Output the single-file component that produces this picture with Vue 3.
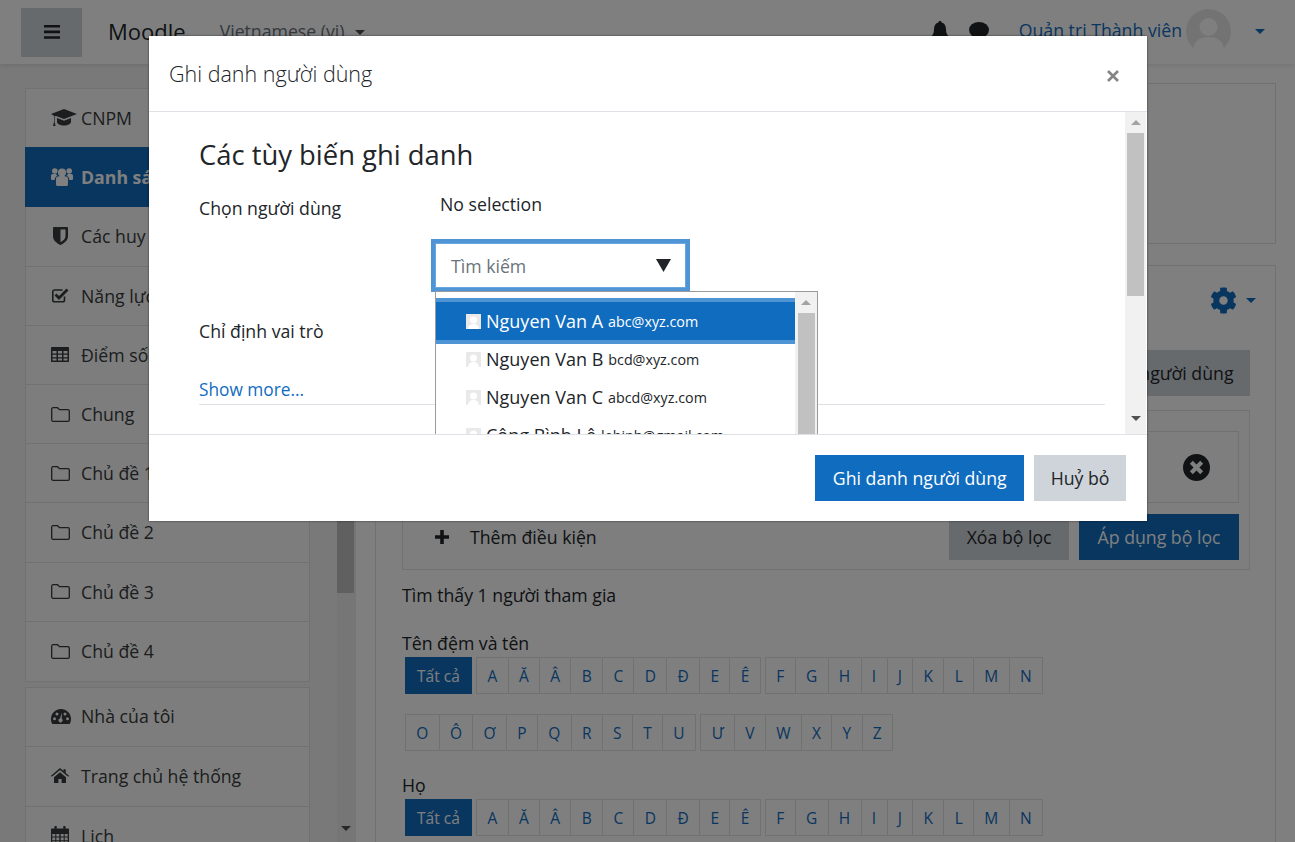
<script setup>
const navTop = [
  { icon: 'cap', label: 'CNPM' },
  { icon: 'users', label: 'Danh sách thành viên', active: true },
  { icon: 'shield', label: 'Các huy hiệu' },
  { icon: 'check', label: 'Năng lực' },
  { icon: 'table', label: 'Điểm số' },
  { icon: 'folder', label: 'Chung' },
  { icon: 'folder', label: 'Chủ đề 1' },
  { icon: 'folder', label: 'Chủ đề 2' },
  { icon: 'folder', label: 'Chủ đề 3' },
  { icon: 'folder', label: 'Chủ đề 4' }
];
const navBottom = [
  { icon: 'gauge', label: 'Nhà của tôi' },
  { icon: 'home', label: 'Trang chủ hệ thống' },
  { icon: 'calendar', label: 'Lịch' }
];
const letters1 = [['A', 'Ă', 'Â', 'B', 'C', 'D', 'Đ', 'E', 'Ê'], ['F', 'G', 'H', 'I', 'J', 'K', 'L', 'M', 'N']];
const letters2 = [['O', 'Ô', 'Ơ', 'P', 'Q', 'R', 'S', 'T', 'U'], ['Ư', 'V', 'W', 'X', 'Y', 'Z']];
const users = [
  { name: 'Nguyen Van A', email: 'abc@xyz.com', selected: true },
  { name: 'Nguyen Van B', email: 'bcd@xyz.com' },
  { name: 'Nguyen Van C', email: 'abcd@xyz.com' },
  { name: 'Công Bình Lê', email: 'lebinh@gmail.com' }
];
const cog = 'M487.4 315.7l-42.6-24.6c4.3-23.2 4.3-47 0-70.2l42.6-24.6c4.9-2.8 7.1-8.6 5.5-14-11.1-35.6-30-67.8-54.7-94.6-3.8-4.1-10-5.1-14.8-2.3L380.8 110c-17.9-15.4-38.5-27.3-60.8-35.1V25.8c0-5.6-3.9-10.5-9.4-11.7-36.7-8.2-74.3-7.8-109.2 0-5.5 1.2-9.4 6.1-9.4 11.7V75c-22.2 7.9-42.8 19.8-60.8 35.1L88.7 85.5c-4.9-2.8-11-1.9-14.8 2.3-24.7 26.7-43.6 58.9-54.7 94.6-1.7 5.4.6 11.2 5.5 14L67.3 221c-4.3 23.2-4.3 47 0 70.2l-42.6 24.6c-4.9 2.8-7.1 8.6-5.5 14 11.1 35.6 30 67.8 54.7 94.6 3.8 4.1 10 5.1 14.8 2.3l42.6-24.6c17.9 15.4 38.5 27.3 60.8 35.1v49.2c0 5.6 3.9 10.5 9.4 11.7 36.7 8.2 74.3 7.8 109.2 0 5.5-1.2 9.4-6.1 9.4-11.7v-49.2c22.2-7.9 42.8-19.8 60.8-35.1l42.6 24.6c4.9 2.8 11 1.9 14.8-2.3 24.7-26.7 43.6-58.9 54.7-94.6 1.5-5.5-.7-11.3-5.6-14.1zM256 336c-44.1 0-80-35.9-80-80s35.9-80 80-80 80 35.9 80 80-35.9 80-80 80z';
</script>

<template>
  <div class="page">
    <header class="topbar">
      <button class="burger">
        <svg width="16" height="14" viewBox="0 0 16 14"><path d="M0 0h16v2.6H0zM0 5.6h16v2.6H0zM0 11.2h16v2.6H0z" fill="#212529" /></svg>
      </button>
      <span class="brand">Moodle</span>
      <span class="lang">Vietnamese ‎(vi)‎</span>
      <i class="caret lang-caret"></i>
      <div class="top-right">
        <svg class="bell" width="18" height="20" viewBox="0 0 18 20"><path d="M9 0c1 0 1.6.7 1.6 1.6C13.400 2.300 15 4.800 15 8c0 4 1 5.500 3 8H0c2-2.500 3-4 3-8 0-3.200 1.600-5.700 4.400-6.400C7.400.7 8 0 9 0zM6.500 17.500h5C11.500 19 10.400 20 9 20s-2.500-1-2.500-2.500z" fill="#212529" /></svg>
        <svg class="bubble" width="20" height="18" viewBox="0 0 20 18"><ellipse cx="10" cy="8" rx="10" ry="8" fill="#212529" /><path d="M4 13l-2 5 7-3z" fill="#212529" /></svg>
        <span class="username">Quản trị Thành viên</span>
        <svg class="avatar" width="45" height="45" viewBox="0 0 45 45">
          <circle cx="22.500" cy="22.500" r="22.500" fill="#e6e6e6" />
          <circle cx="22.500" cy="18" r="9" fill="#fff" />
          <path d="M7 40c1-9 8-12 15.500-12S37 31 38 40c-4 3-9.500 5-15.500 5S11 43 7 40z" fill="#fff" />
        </svg>
        <i class="caret blue-caret"></i>
      </div>
    </header>

    <div class="layout">
      <aside class="drawer">
        <div class="nav-col">
          <nav class="nav-card">
            <a v-for="item in navTop" :key="item.label" class="nav-item" :class="{ active: item.active }">
              <span class="nav-icon">
                <svg v-if="item.icon === 'cap'" width="26" height="18" viewBox="0 0 26 18"><path d="M13 0l13 5-13 5L4.500 6.700 12.500 5.300 3.600 7.200V13l1 4H2l1-4V6.700L0 5zM6 9l7 2.700L20 9v4c0 1.700-3 3.500-7 3.500S6 14.700 6 13z" fill="currentColor" /></svg>
                <svg v-else-if="item.icon === 'users'" width="22" height="20" viewBox="0 0 22 20"><g fill="currentColor"><circle cx="11" cy="5.500" r="4" /><circle cx="3.800" cy="4" r="2.800" /><circle cx="18.200" cy="4" r="2.800" /><path d="M5 11c1-1.400 3-2 6-2s5 .6 6 2v6.500c0 1-1 1.500-2 1.500H7c-1 0-2-.5-2-1.500z" /><path d="M0 8.500C0 7.600.9 7 2.300 7h2.900c.3 1 .8 1.600 1.300 2C4.500 9.600 3.800 11 3.700 13H1.300C.5 13 0 12.400 0 11.700zM22 8.500C22 7.600 21.100 7 19.700 7h-2.900c-.3 1-.8 1.600-1.300 2 2 .6 2.700 2 2.800 4h2.400c.8 0 1.300-.6 1.300-1.300z" /></g></svg>
                <svg v-else-if="item.icon === 'shield'" class="shield" width="15" height="18" viewBox="0 0 15 18"><path d="M1 0h13c.6 0 1 .4 1 1v8c0 5-4.500 7.500-7.500 9C4.500 16.500 0 14 0 9V1c0-.6.400-1 1-1zm6.500 2.500v12.700c2.500-1.400 5-3.200 5-6.200V2.500z" fill="currentColor" fill-rule="evenodd" /></svg>
                <svg v-else-if="item.icon === 'check'" width="18" height="17" viewBox="0 0 18 17"><path d="M13.500 9.500v3.500c0 1-.7 1.800-1.700 1.800H3.500c-1 0-1.700-.8-1.700-1.800V4.700c0-1 .7-1.700 1.700-1.700h8" fill="none" stroke="currentColor" stroke-width="1.600" /><path d="M4.500 7.500l3.500 3.500L16.500 2.500" fill="none" stroke="currentColor" stroke-width="2.800" /></svg>
                <svg v-else-if="item.icon === 'table'" width="18" height="15" viewBox="0 0 18 15"><path d="M1 0h16c.6 0 1 .4 1 1v13c0 .6-.4 1-1 1H1c-.6 0-1-.4-1-1V1c0-.6.400-1 1-1zm.5 4v2.500h4V4zm5.500 0v2.500h4V4zm5.500 0v2.500h4V4zm-11 3.800v2.400h4V7.800zm5.500 0v2.400h4V7.800zm5.500 0v2.400h4V7.800zm-11 3.700v2h4v-2zm5.500 0v2h4v-2zm5.500 0v2h4v-2z" fill="currentColor" fill-rule="evenodd" /></svg>
                <svg v-else width="19" height="15" viewBox="0 0 19 15"><path d="M.7 13V2C.7 1.300 1.300.7 2 .7h4.500l2 2H17c.7 0 1.300.6 1.300 1.300v9c0 .7-.6 1.300-1.300 1.300H2C1.300 14.300.7 13.700.7 13z" fill="none" stroke="currentColor" stroke-width="1.300" /></svg>
              </span>
              <span class="nav-label">{{ item.label }}</span>
            </a>
          </nav>
          <nav class="nav-card second">
            <a v-for="item in navBottom" :key="item.label" class="nav-item">
              <span class="nav-icon">
                <svg v-if="item.icon === 'gauge'" width="20" height="15" viewBox="0 0 20 15"><path d="M10 0c5.500 0 10 4.400 10 10 0 1.900-.5 3.600-1.400 5H1.400C.5 13.600 0 11.900 0 10 0 4.400 4.500 0 10 0zM3.500 8.300a1.500 1.500 0 1 0 0 3 1.500 1.500 0 0 0 0-3zM6 3.600a1.500 1.500 0 1 0 0 3 1.500 1.500 0 0 0 0-3zM14 3.600a1.500 1.500 0 1 0 0 3 1.500 1.500 0 0 0 0-3zM16.500 8.300a1.500 1.500 0 1 0 0 3 1.500 1.500 0 0 0 0-3zM10.700 3.500L9 9.400a2 2 0 1 0 1.800.4z" fill="currentColor" fill-rule="evenodd" /></svg>
                <svg v-else-if="item.icon === 'home'" width="18" height="15" viewBox="0 0 18 15"><path d="M9 0l3.500 3V1.200h2.200V5L18 7.800l-.9 1L9 2.100.9 8.800 0 7.800zM3 9.200l6-5 6 5V15h-4.400v-4H7.400v4H3z" fill="currentColor" /></svg>
                <svg v-else width="18" height="20" viewBox="0 0 18 20"><path d="M1 2.500h16c.6 0 1 .4 1 1V19c0 .6-.4 1-1 1H1c-.6 0-1-.4-1-1V3.500c0-.6.400-1 1-1zm.3 5.500v2.600h3V8zm4 0v2.600h3V8zm4.400 0v2.600h3V8zm4 0v2.600h3V8zm-12.400 3.600v2.600h3v-2.600zm4 0v2.600h3v-2.600zm4.400 0v2.600h3v-2.600zm4 0v2.600h3v-2.600zM1.300 15.200v3.400h3v-3.400zm4 0v3.400h3v-3.400zm4.400 0v3.400h3v-3.400zm4 0v3.400h3v-3.400z" fill="currentColor" fill-rule="evenodd" /><rect x="3.500" width="2.200" height="5" fill="currentColor" /><rect x="12.300" width="2.200" height="5" fill="currentColor" /></svg>
              </span>
              <span class="nav-label">{{ item.label }}</span>
            </a>
          </nav>
        </div>
        <div class="drawer-scroll">
          <div class="drawer-thumb"></div>
          <i class="drawer-arrow"></i>
        </div>
      </aside>

      <main class="main">
        <section class="card summary"></section>
        <section class="card participants">
          <div class="gear-row">
            <svg width="27" height="27" viewBox="0 0 512 512"><path :d="cog" fill="#106cbf" /></svg>
            <i class="caret blue-caret"></i>
          </div>
          <div class="enrol-row"><button class="btn grey">Ghi danh người dùng</button></div>
          <div class="filter-box">
            <div class="filter-inner">
              <svg width="27" height="27" viewBox="0 0 26 26"><circle cx="13" cy="13" r="13" fill="#212529" /><path d="M8 8l10 10M18 8L8 18" stroke="#fff" stroke-width="4" /></svg>
            </div>
            <div class="filter-actions">
              <svg width="14" height="14" viewBox="0 0 14 14"><path d="M5.200 0h3.600v5.200H14v3.600H8.800V14H5.200V8.800H0V5.200h5.200z" fill="#212529" /></svg>
              <span class="add-cond">Thêm điều kiện</span>
              <button class="btn grey clear">Xóa bộ lọc</button>
              <button class="btn blue apply">Áp dụng bộ lọc</button>
            </div>
          </div>
          <p class="found">Tìm thấy 1 người tham gia</p>
          <div class="initials">
            <div class="initials-title">Tên đệm và tên</div>
            <div class="letter-row">
              <a class="letter all">Tất cả</a>
              <div v-for="(group, i) in letters1" :key="i" class="letter-group">
                <a v-for="l in group" :key="l" class="letter">{{ l }}</a>
              </div>
            </div>
            <div class="letter-row">
              <div v-for="(group, i) in letters2" :key="i" class="letter-group">
                <a v-for="l in group" :key="l" class="letter">{{ l }}</a>
              </div>
            </div>
          </div>
          <div class="initials">
            <div class="initials-title">Họ</div>
            <div class="letter-row">
              <a class="letter all">Tất cả</a>
              <div v-for="(group, i) in letters1" :key="i" class="letter-group">
                <a v-for="l in group" :key="l" class="letter">{{ l }}</a>
              </div>
            </div>
          </div>
        </section>
      </main>
    </div>

    <div class="backdrop"></div>

    <div class="modal">
      <div class="modal-head">
        <h5 class="modal-title">Ghi danh người dùng</h5>
        <svg class="close" width="12" height="12" viewBox="0 0 12 12"><path d="M1 1l10 10M11 1L1 11" stroke="#858585" stroke-width="2.600" /></svg>
      </div>
      <div class="modal-body">
        <div class="modal-content">
          <h3 class="options-title">Các tùy biến ghi danh</h3>
          <div class="form-row pick">
            <label>Chọn người dùng</label>
            <div>
              <div class="no-sel">No selection</div>
              <div class="search">
                <span>Tìm kiếm</span>
                <svg width="15" height="13" viewBox="0 0 15 13"><path d="M0 0h15L7.500 13z" fill="#212529" /></svg>
              </div>
            </div>
          </div>
          <div class="form-row role"><label>Chỉ định vai trò</label></div>
          <a class="show-more">Show more...</a>
          <div class="dropdown">
            <div class="options">
              <div v-for="u in users" :key="u.name" class="option" :class="{ selected: u.selected }">
                <svg width="15" height="15" viewBox="0 0 15 15"><rect width="15" height="15" fill="#e9e9e9" /><circle cx="7.500" cy="6" r="3.500" fill="#fff" /><path d="M2 15c.5-4 3-5 5.500-5s5 1 5.500 5z" fill="#fff" /></svg>
                <span class="opt-name">{{ u.name }}</span>
                <small class="opt-mail">{{ u.email }}</small>
              </div>
            </div>
            <div class="drop-scroll">
              <i class="arrow-up"></i>
              <div class="drop-thumb"></div>
            </div>
          </div>
        </div>
        <div class="body-scroll">
          <i class="arrow-up"></i>
          <div class="body-thumb"></div>
          <i class="arrow-down"></i>
        </div>
      </div>
      <div class="modal-foot">
        <button class="btn blue enrol">Ghi danh người dùng</button>
        <button class="btn light">Huỷ bỏ</button>
      </div>
    </div>
  </div>
</template>

<style>
html, body { margin: 0; }
</style>

<style scoped>
.page {
  width: 1295px;
  height: 842px;
  overflow: hidden;
  position: relative;
  background: #fff;
  color: #212529;
  font-family: "Open Sans", "Noto Sans", sans-serif;
  font-size: 17.700px;
}

.topbar {
  height: 64px;
  display: flex;
  align-items: center;
  padding-left: 21px;
  box-sizing: border-box;
  background: #fff;
  box-shadow: 0 2px 4px rgba(0, 0, 0, 0.08);
  position: relative;
}
.burger {
  width: 61px;
  height: 49px;
  border: none;
  background: #ced4da;
  display: flex;
  align-items: center;
  justify-content: center;
}
.brand { margin-left: 26px; font-size: 22px; margin-bottom: 3px; }
.lang { margin-left: 34px; color: #6a737b; margin-bottom: 2px; }
.caret {
  display: inline-block;
  width: 0;
  height: 0;
  border-left: 5.500px solid transparent;
  border-right: 5.500px solid transparent;
  border-top: 5.500px solid currentColor;
}
.lang-caret { margin-left: 10px; color: #495057; }
.blue-caret { color: #106cbf; }
.top-right {
  margin-left: auto;
  display: flex;
  align-items: center;
  padding-right: 30px;
  padding-bottom: 2px;
}
.bubble { margin-left: 20px; }
.username { margin-left: 30px; margin-right: 4px; color: #106cbf; margin-bottom: 3px; }
.top-right .blue-caret { margin-left: 24px; }

.layout { display: flex; height: 778px; }

.drawer {
  width: 356px;
  flex: none;
  box-sizing: border-box;
  background: #f2f2f2;
  display: flex;
  padding: 24px 0 0 25px;
}
.nav-col { width: 285px; flex: none; }
.nav-card {
  background: #fafafa;
  border: 1px solid #dee2e6;
  box-sizing: border-box;
}
.nav-card.second { margin-top: 5px; }
.nav-item {
  height: 59.200px;
  box-sizing: border-box;
  display: flex;
  align-items: center;
  padding-left: 25px;
  color: #373a3c;
  border-bottom: 1px solid #dee2e6;
  white-space: nowrap;
}
.second .nav-item { height: 59.600px; padding-bottom: 2px; }
.nav-item:last-child { border-bottom: none; }
.nav-item.active {
  background: #106cbf;
  color: #fff;
  font-weight: 700;
  margin: -1px -1px 0;
  height: 60.200px;
  padding-left: 26px;
  border-bottom: none;
}
.nav-icon {
  width: 30px;
  flex: none;
  display: flex;
  align-items: center;
}
.shield { margin-left: 2px; }
.drawer-scroll {
  width: 19px;
  margin-left: 27px;
  height: 778px;
  background: #ededed;
  margin-top: -24px;
  flex: none;
}
.drawer-thumb {
  background: #c1c1c1;
  width: 17px;
  height: 529px;
}
.drawer-arrow {
  display: block;
  width: 0;
  margin: 233px 0 0 4px;
  border-left: 5px solid transparent;
  border-right: 5px solid transparent;
  border-top: 5px solid #505050;
}

.main {
  flex: 1;
  padding: 19px 19px 0 19px;
  min-width: 0;
}
.card {
  border: 1px solid #dee2e6;
  box-sizing: border-box;
  background: #fff;
}
.summary { height: 161px; margin-bottom: 21px; }
.participants { height: 600px; padding: 0 25px 0 26px; }
.gear-row {
  display: flex;
  justify-content: flex-end;
  align-items: center;
  gap: 9px;
  height: 27px;
  margin-top: 21px;
  margin-right: -6px;
}
.enrol-row { display: flex; justify-content: flex-end; margin-top: 36px; }
.btn {
  border: none;
  height: 46px;
  padding: 0 16.500px;
  font: inherit;
  white-space: nowrap;
}
.grey { background: #ced4da; color: #212529; }
.blue { background: #106cbf; color: #fff; }
.light { background: #ced4da; color: #212529; }
.btn.clear { padding: 0 17.500px; }
.btn.apply { padding: 0 18.500px; }
.btn.enrol { padding: 0 17.500px; }
.filter-box {
  margin-top: 14px;
  height: 160px;
  box-sizing: border-box;
  border: 1px solid #dee2e6;
  background: #fbfdfb;
  padding: 20px 10px 0 11px;
}
.filter-inner {
  height: 72px;
  box-sizing: border-box;
  border: 1px solid #dee2e6;
  display: flex;
  align-items: center;
  justify-content: flex-end;
  padding-right: 28px;
}
.filter-actions {
  display: flex;
  align-items: center;
  margin-top: 11px;
  padding-left: 21px;
  gap: 10px;
}
.add-cond { margin-left: 11px; margin-right: auto; }
.found { margin: 14px 0 0; height: 25px; line-height: 23px; }
.initials { margin-top: 23px; }
.initials-title { line-height: 22px; margin-bottom: 3px; }
.letter-row {
  display: flex;
  gap: 4.500px;
  margin-bottom: 20px;
  margin-left: 3px;
}
.letter-group { display: flex; border: 1px solid #dee2e6; border-right: none; }
.letter {
  height: 35px;
  padding: 0 10.300px;
  display: flex;
  align-items: center;
  font-size: 15.500px;
  color: #106cbf;
  border-right: 1px solid #dee2e6;
}
.letter.all { background: #106cbf; color: #fff; border: none; padding: 0 12px; height: 37px; }

.backdrop {
  position: absolute;
  inset: 0;
  background: rgba(0, 0, 0, 0.5);
}

.modal {
  position: absolute;
  left: 149px;
  top: 36px;
  width: 998px;
  height: 485px;
  background: #fff;
  box-shadow: 0 0 2px rgba(0, 0, 0, 0.6);
  display: flex;
  flex-direction: column;
}
.modal-head {
  height: 76px;
  flex: none;
  box-sizing: border-box;
  border-bottom: 1px solid #dee2e6;
  display: flex;
  align-items: center;
  justify-content: space-between;
  padding: 0 28px 0 20px;
}
.modal-title { margin: 0; font-size: 21.500px; font-weight: 300; color: #212529; }
.close { margin-top: 5px; }
.modal-body {
  flex: 1;
  display: flex;
  min-height: 0;
  overflow: hidden;
  border-bottom: 1px solid #dee2e6;
}
.modal-content {
  flex: 1;
  padding: 23px 20px 0 50px;
  position: relative;
}
.options-title { margin: 0; font-size: 27.400px; font-weight: 400; line-height: 40px; }
.form-row { display: grid; grid-template-columns: 241px 1fr; }
.form-row.pick { margin-top: 16px; height: 123px; }
.form-row label { line-height: 26px; padding-top: 4px; }
.form-row.role { height: 30px; }
.no-sel { line-height: 26px; }
.search {
  margin: 22px 0 0 -9px;
  width: 259px;
  height: 53px;
  box-sizing: border-box;
  border: 4px solid #4f94d4;
  box-shadow: inset 0 0 0 1px #6aa7de;
  display: flex;
  align-items: center;
  justify-content: space-between;
  padding: 0 15px 0 16px;
  color: #6a737b;
}
.show-more {
  display: block;
  margin-top: 33px;
  padding-bottom: 2px;
  line-height: 25px;
  font-size: 17.300px;
  color: #106cbf;
  border-bottom: 1px solid #dee2e6;
}
.dropdown {
  position: absolute;
  left: 286px;
  top: 179px;
  width: 383px;
  height: 200px;
  box-sizing: border-box;
  border: 1px solid #9a9a9a;
  background: #fff;
  display: flex;
}
.options { flex: 1; padding-top: 6px; }
.option {
  height: 38px;
  display: flex;
  align-items: center;
  padding-left: 30px;
  box-sizing: border-box;
  font-size: 18px;
  white-space: nowrap;
}
.option.selected {
  height: 46px;
  margin-bottom: -4px;
  background: #106cbf;
  color: #fff;
  border-top: 4px solid #4f94d4;
  border-bottom: 4px solid #4f94d4;
}
.opt-name { margin-left: 5px; }
.opt-mail { margin-left: 5px; font-size: 14.300px; }
.drop-scroll { width: 22px; background: #f1f1f1; flex: none; padding-top: 8px; }
.drop-thumb { width: 17px; margin: 8px 0 0 3px; height: 170px; background: #c1c1c1; }
.arrow-up, .arrow-down {
  display: block;
  width: 0;
  border-left: 5px solid transparent;
  border-right: 5px solid transparent;
}
.arrow-up { border-bottom: 5px solid #a3a3a3; margin-left: 6px; }
.arrow-down { border-top: 5px solid #505050; margin-left: 6px; }
.body-scroll {
  width: 21px;
  margin-right: 1px;
  background: #f1f1f1;
  flex: none;
  padding-top: 8px;
  box-sizing: border-box;
}
.body-thumb { width: 17px; height: 163px; margin: 8px 0 0 2px; background: #c1c1c1; }
.body-scroll .arrow-down { margin-top: 120px; }
.modal-foot {
  height: 86px;
  flex: none;
  display: flex;
  align-items: center;
  justify-content: flex-end;
  gap: 10px;
  padding-right: 21px;
  box-sizing: border-box;
}
</style>
